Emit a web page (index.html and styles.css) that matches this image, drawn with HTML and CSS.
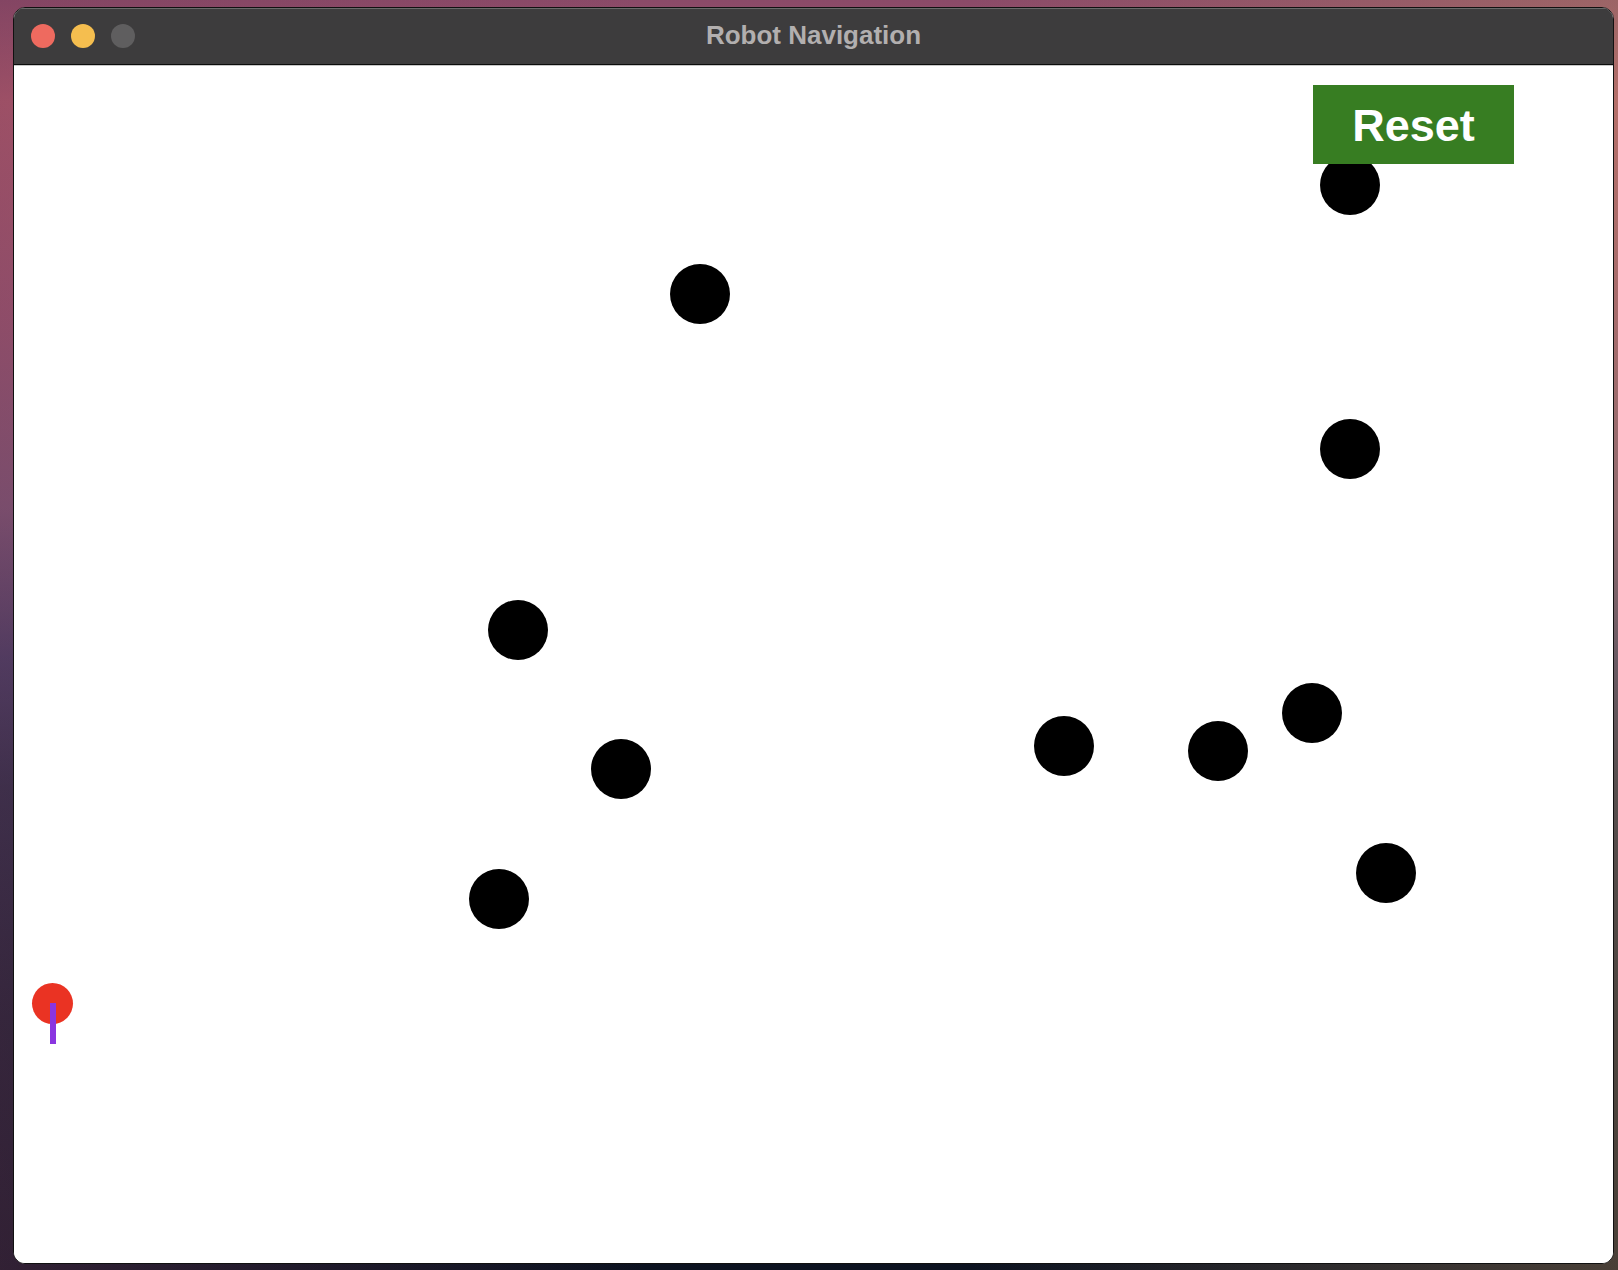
FILE: index.html
```html
<!DOCTYPE html>
<html>
<head>
<meta charset="utf-8">
<link rel="stylesheet" href="styles.css">
</head>
<body>
<div class="desktop">
  <div class="window">
    <div class="titlebar">
      <div class="lights">
        <span class="light red"></span>
        <span class="light yellow"></span>
        <span class="light gray"></span>
      </div>
      <div class="title">Robot Navigation</div>
    </div>
    <div class="canvas">
      <div class="obstacle" style="left:1306px;top:89px"></div>
      <div class="obstacle" style="left:656px;top:198px"></div>
      <div class="obstacle" style="left:1306px;top:353px"></div>
      <div class="obstacle" style="left:474px;top:534px"></div>
      <div class="obstacle" style="left:577px;top:673px"></div>
      <div class="obstacle" style="left:455px;top:803px"></div>
      <div class="obstacle" style="left:1020px;top:650px"></div>
      <div class="obstacle" style="left:1174px;top:655px"></div>
      <div class="obstacle" style="left:1268px;top:617px"></div>
      <div class="obstacle" style="left:1342px;top:777px"></div>
      <div class="robot" style="left:18px;top:917px"></div>
      <div class="heading" style="left:36px;top:937px"></div>
      <button class="reset">Reset</button>
    </div>
  </div>
</div>
</body>
</html>
```

FILE: styles.css
```css
html, body {
  margin: 0;
  padding: 0;
  width: 1618px;
  height: 1270px;
  overflow: hidden;
}
.desktop {
  width: 1618px;
  height: 1270px;
  box-sizing: border-box;
  padding: 7px 4px 6px 13px;
  background:
    linear-gradient(90deg, rgba(120,60,90,0.35) 0%, rgba(0,0,0,0) 40%, rgba(0,0,0,0) 60%, rgba(190,150,100,0.35) 100%),
    linear-gradient(180deg, #8a4a68 0%, #b05a6c 8%, #9a5570 25%, #7a5575 40%, #3c3a62 52%, #202842 62%, #121a2c 80%, #0c1220 100%);
}
.window {
  width: 1601px;
  height: 1257px;
  box-sizing: border-box;
  border: 1px solid #111;
  border-radius: 12px;
  overflow: hidden;
  display: flex;
  flex-direction: column;
  background: #ffffff;
}
.titlebar {
  position: relative;
  height: 57px;
  flex: none;
  background: #3d3c3d;
  border-top: 1px solid #6a6a6a;
  border-bottom: 1px solid #0c0c0c;
  box-shadow: 0 1px 0 #c8c8c8;
  display: flex;
  align-items: center;
  justify-content: center;
  box-sizing: border-box;
}
.lights {
  position: absolute;
  left: 17px;
  top: 15px;
  display: flex;
  gap: 16px;
}
.light {
  width: 24px;
  height: 24px;
  border-radius: 50%;
  display: block;
}
.light.red { background: #ee6a5f; }
.light.yellow { background: #f5be4f; }
.light.gray { background: #5f5e5f; }
.title {
  font-family: "Liberation Sans", Arial, sans-serif;
  font-weight: bold;
  font-size: 26px;
  color: #b2afaf;
  letter-spacing: 0;
  margin-top: -2px;
}
.canvas {
  position: relative;
  flex: 1;
  margin-top: 1px;
  background: #ffffff;
}
.obstacle {
  position: absolute;
  width: 60px;
  height: 60px;
  border-radius: 50%;
  background: #000000;
}
.robot {
  position: absolute;
  width: 41px;
  height: 41px;
  border-radius: 50%;
  background: #ea3323;
}
.heading {
  position: absolute;
  width: 6px;
  height: 41px;
  background: #8a35e0;
}
.reset {
  position: absolute;
  left: 1299px;
  top: 19px;
  width: 201px;
  height: 79px;
  border: none;
  margin: 0;
  padding: 2px 0 0 0;
  background: #377d22;
  color: #ffffff;
  font-family: "Liberation Sans", Arial, sans-serif;
  font-weight: bold;
  font-size: 45px;
  line-height: 1;
}
```
